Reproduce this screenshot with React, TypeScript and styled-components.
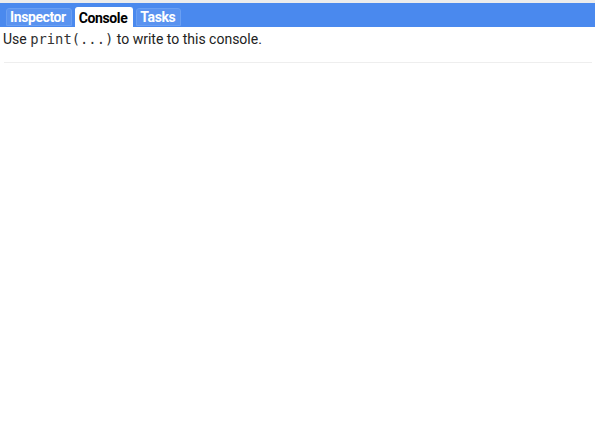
import React from "react";
import styled, { createGlobalStyle } from "styled-components";

const Global = createGlobalStyle`
  html, body { margin: 0; padding: 0; background: #fff; }
  body { font-family: Roboto, "Noto Sans", sans-serif; }
`;

const Page = styled.div`
  border-top: 3px solid #ececec;
`;

const TabBar = styled.div`
  display: flex;
  align-items: flex-end;
  gap: 3px;
  height: 24px;
  padding: 0 0 0 6px;
  background: #4a89ee;
  box-sizing: border-box;
`;

const Tab = styled.div<{ $active?: boolean }>`
  height: ${(p) => (p.$active ? "20px" : "18px")};
  margin-bottom: ${(p) => (p.$active ? "0" : "1px")};
  padding: 0 5px 0 3px;
  padding-top: ${(p) => (p.$active ? "1px" : "0")};
  box-sizing: border-box;
  display: flex;
  align-items: center;
  border-radius: 3px 3px 0 0;
  border: 1px solid ${(p) => (p.$active ? "#ffffff" : "#6a9ff2")};
  border-bottom: ${(p) => (p.$active ? "none" : "1px solid #6a9ff2")};
  background: ${(p) => (p.$active ? "#ffffff" : "#5a93f0")};
  color: ${(p) => (p.$active ? "#000" : "#fff")};
  font-family: Roboto, sans-serif;
  font-weight: bold;
  font-size: 14px;
  letter-spacing: -0.4px;
  line-height: 16px;
`;

const Body = styled.div`
  padding: 4px 3px 0 3px;
`;

const Hint = styled.div`
  font-family: Roboto, sans-serif;
  font-size: 14px;
  color: #222;
  line-height: 17px;
`;

const Code = styled.code`
  font-family: "DejaVu Sans Mono", monospace;
  font-size: 13.8px;
  color: #333;
`;

const Rule = styled.hr`
  margin: 14px 0 0 1px;
  width: 588px;
  border: none;
  border-top: 1px solid #eeeeee;
`;

export default function App() {
  return (
    <Page>
      <Global />
      <TabBar>
        <Tab>Inspector</Tab>
        <Tab $active>Console</Tab>
        <Tab>Tasks</Tab>
      </TabBar>
      <Body>
        <Hint>
          Use <Code>print(...)</Code> to write to this console.
        </Hint>
        <Rule />
      </Body>
    </Page>
  );
}
